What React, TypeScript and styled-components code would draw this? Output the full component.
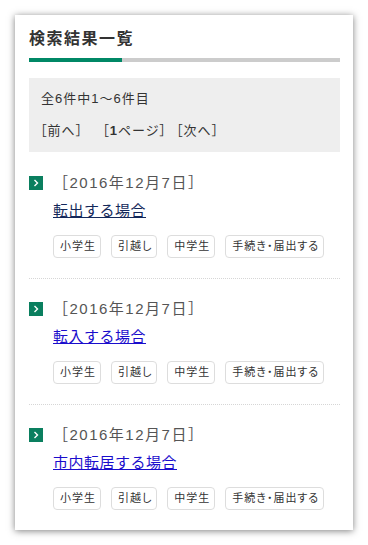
import styled, { createGlobalStyle } from "styled-components";

const GlobalStyle = createGlobalStyle`
  body {
    margin: 0;
    background: #fff;
    font-family: "Liberation Sans", "Noto Sans CJK JP", sans-serif;
    color: #333;
  }
`;

type Result = {
  date: string;
  title: string;
  visited?: boolean;
};

const results: Result[] = [
  { date: "［2016年12月7日］", title: "転出する場合", visited: true },
  { date: "［2016年12月7日］", title: "転入する場合" },
  { date: "［2016年12月7日］", title: "市内転居する場合" },
];

const tags = ["小学生", "引越し", "中学生", "手続き・届出する"];

const ArrowIcon = () => (
  <IconBox>
    <svg width="14" height="14" viewBox="0 0 14 14">
      <path d="M5.5 4 L8.5 7 L5.5 10" fill="none" stroke="#fff" strokeWidth="1.4" />
    </svg>
  </IconBox>
);

const App = () => {
  return (
    <>
      <GlobalStyle />
      <Card>
        <Title>検索結果一覧</Title>
        <TitleBar>
          <TitleBarFill />
        </TitleBar>
        <InfoBox>
          <Count>全6件中1～6件目</Count>
          <Pager>
            <PageItem $gap={20}>［前へ］</PageItem>
            <PageItem $gap={10}>
              ［<b>1</b>ページ］
            </PageItem>
            <PageItem $gap={0}>［次へ］</PageItem>
          </Pager>
        </InfoBox>
        <List>
          {results.map((r) => (
            <Item key={r.title}>
              <ItemHead>
                <ArrowIcon />
                <DateText>{r.date}</DateText>
              </ItemHead>
              <ItemLink href="#" $visited={r.visited}>
                {r.title}
              </ItemLink>
              <TagList>
                {tags.map((t) => (
                  <Tag key={t}>{t}</Tag>
                ))}
              </TagList>
            </Item>
          ))}
        </List>
      </Card>
    </>
  );
};

const Card = styled.div`
  margin: 15px;
  width: 338px;
  box-sizing: border-box;
  padding: 12px 13px 0 14px;
  background: #fff;
  box-shadow: 0 1px 7px rgba(0, 0, 0, 0.5);
`;

const Title = styled.h1`
  margin: 0;
  padding-bottom: 7px;
  font-size: 16px;
  line-height: 24px;
  font-weight: bold;
  letter-spacing: 1.5px;
  color: #333;
`;

const TitleBar = styled.div`
  height: 4px;
  background: #cccccc;
  display: flex;
`;

const TitleBarFill = styled.div`
  width: 93px;
  background: #008866;
`;

const InfoBox = styled.div`
  margin: 16px 0 1px;
  padding: 11px 12px;
  background: #eeeeee;
  font-size: 13px;
  line-height: 20px;
  color: #333;
`;

const Count = styled.div`
  letter-spacing: 1px;
`;

const Pager = styled.div`
  margin-top: 12px;
  display: flex;
  font-feature-settings: "palt";
  letter-spacing: 1px;
`;

const PageItem = styled.span<{ $gap: number }>`
  margin-right: ${(p) => p.$gap}px;
  margin-left: -1px;
  white-space: nowrap;

  b {
    font-weight: bold;
  }
`;

const List = styled.div`
  display: flex;
  flex-direction: column;
`;

const Item = styled.div`
  padding: 20px 0;
  border-bottom: 1px dotted #d6d6d6;

  &:last-child {
    border-bottom: none;
  }
`;

const ItemHead = styled.div`
  display: flex;
  align-items: center;
  height: 20px;
`;

const IconBox = styled.span`
  width: 14px;
  height: 14px;
  background: #0a7f5f;
  display: flex;
  margin-right: 10px;
`;

const DateText = styled.span`
  font-size: 15px;
  line-height: 20px;
  letter-spacing: 1.5px;
  color: #555;
  white-space: nowrap;
`;

const ItemLink = styled.a<{ $visited?: boolean }>`
  display: inline-block;
  margin: 8px 0 0 24px;
  font-size: 15px;
  line-height: 20px;
  letter-spacing: 0.5px;
  color: ${(p) => (p.$visited ? "#13285a" : "#1a0dcc")};
  text-decoration: underline;
`;

const TagList = styled.div`
  display: flex;
  gap: 10px;
  margin: 14px 0 0 24px;
`;

const Tag = styled.span`
  flex-shrink: 0;
  box-sizing: border-box;
  height: 23px;
  padding: 0 4px 0 6px;
  border: 1px solid #dddddd;
  border-radius: 4px;
  background: #fff;
  font-size: 11px;
  line-height: 21px;
  letter-spacing: 1px;
  font-feature-settings: "palt";
  white-space: nowrap;
  color: #333;
`;

export default App;
